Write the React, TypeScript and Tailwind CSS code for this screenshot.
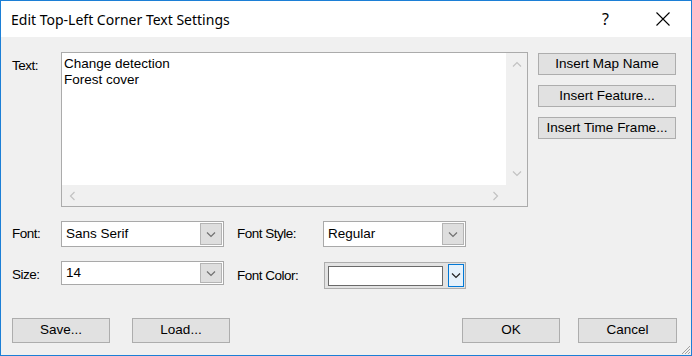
import React from 'react';

const Chevron = ({ dir, color }: { dir: 'up' | 'down' | 'left' | 'right'; color: string }) => {
    const paths: Record<string, string> = {
        down: 'M1 1.5 L5 5.5 L9 1.5',
        up: 'M1 5.5 L5 1.5 L9 5.5',
        left: 'M5.5 1 L1.5 5 L5.5 9',
        right: 'M1.5 1 L5.5 5 L1.5 9',
    };
    const vertical = dir === 'up' || dir === 'down';
    return (
        <svg width={vertical ? 10 : 7} height={vertical ? 7 : 10} viewBox={vertical ? '0 0 10 7' : '0 0 7 10'}>
            <path d={paths[dir]} fill="none" stroke={color} strokeWidth="1.2" />
        </svg>
    );
};

const Combo = ({ value, width, height }: { value: string; width: string; height: string }) => (
    <div className={`${width} ${height} flex items-stretch bg-white border border-[#a9a9a9] p-px`}>
        <div className="flex-1 pl-[3px] flex items-center text-[13.5px] text-black">{value}</div>
        <div className="w-[22px] bg-[#dedede] border border-[#b4b4b4] flex items-center justify-center">
            <Chevron dir="down" color="#707070" />
        </div>
    </div>
);

const Button = ({ label, width, height }: { label: string; width: string; height: string }) => (
    <button className={`${width} ${height} bg-[#e1e1e1] border border-[#adadad] text-[13.5px] text-black flex items-center justify-center`}>
        {label}
    </button>
);

export default function App() {
    return (
        <div className="w-[692px] h-[356px] border border-[#1c7fd6] flex flex-col bg-[#f0f0f0] relative" style={{ fontFamily: '"Liberation Sans", Arial, sans-serif' }}>
            {/* title bar */}
            <div className="h-[36px] bg-white flex items-center">
                <div className="flex-1 pl-[10px] text-[14px] text-black" style={{ fontFamily: '"Noto Sans", sans-serif' }}>
                    Edit Top-Left Corner Text Settings
                </div>
                <div className="w-[57px] h-full flex items-center justify-center text-[16px] text-black" style={{ fontFamily: '"Noto Sans", sans-serif' }}>?</div>
                <div className="w-[57px] h-full flex items-center justify-center">
                    <svg width="14" height="14" viewBox="0 0 14 14">
                        <path d="M0.5 0.5 L13.5 13.5 M13.5 0.5 L0.5 13.5" stroke="#000" strokeWidth="1.1" />
                    </svg>
                </div>
            </div>

            <div className="flex-1 flex flex-col pl-[11px] pr-[14px] pb-[12px]">
                {/* text row */}
                <div className="flex items-start mt-[15px]">
                    <div className="w-[49px] pt-[4px] text-[13.5px] text-black tracking-[-0.5px]">Text:</div>
                    <div className="w-[467px] h-[155px] border border-[#ababab] flex flex-col">
                        <div className="flex-1 flex">
                            <div className="flex-1 bg-white pl-[2px] pt-[3px] text-[13.5px] leading-[16px] text-black">
                                <div>Change detection</div>
                                <div>Forest cover</div>
                            </div>
                            <div className="w-[21px] flex flex-col justify-between items-center py-[8px]">
                                <Chevron dir="up" color="#c2c2c2" />
                                <Chevron dir="down" color="#c2c2c2" />
                            </div>
                        </div>
                        <div className="h-[21px] flex items-center justify-between pl-[7px] pr-[28px]">
                            <Chevron dir="left" color="#c2c2c2" />
                            <Chevron dir="right" color="#c2c2c2" />
                        </div>
                    </div>
                    <div className="ml-[10px] mt-px flex flex-col gap-[10px]">
                        <Button label="Insert Map Name" width="w-[138px]" height="h-[22px]" />
                        <Button label="Insert Feature..." width="w-[138px]" height="h-[22px]" />
                        <Button label="Insert Time Frame..." width="w-[138px]" height="h-[22px]" />
                    </div>
                </div>

                {/* font row */}
                <div className="flex items-center mt-[14px] text-[13.5px] text-black">
                    <div className="w-[49px] tracking-[-0.5px]">Font:</div>
                    <Combo value="Sans Serif" width="w-[163px]" height="h-[26px]" />
                    <div className="w-[86px] ml-[13px] tracking-[-0.5px]">Font Style:</div>
                    <Combo value="Regular" width="w-[143px]" height="h-[26px]" />
                </div>

                {/* size row */}
                <div className="flex items-start mt-[14px] text-[13.5px] text-black">
                    <div className="w-[49px] pt-[4px] tracking-[-0.5px]">Size:</div>
                    <Combo value="14" width="w-[163px]" height="h-[24px]" />
                    <div className="w-[87px] ml-[13px] pt-[5px] tracking-[-0.5px]">Font Color:</div>
                    <div className="w-[142px] h-[27px] mt-px bg-[#e3e3e3] border border-[#adadad] flex items-center pl-[3px] pr-px">
                        <div className="w-[115px] h-[20px] bg-white border border-[#6a6a6a]"></div>
                        <div className="ml-[5px] w-[16px] h-[23px] bg-[#e5f1fb] border border-[#0078d7] flex items-center justify-center">
                            <Chevron dir="down" color="#222" />
                        </div>
                    </div>
                </div>

                {/* bottom buttons */}
                <div className="flex-1" />
                <div className="flex items-center">
                    <Button label="Save..." width="w-[98px]" height="h-[25px]" />
                    <div className="ml-[22px]">
                        <Button label="Load..." width="w-[98px]" height="h-[25px]" />
                    </div>
                    <div className="flex-1" />
                    <Button label="OK" width="w-[98px]" height="h-[25px]" />
                    <div className="ml-[18px]">
                        <Button label="Cancel" width="w-[99px]" height="h-[25px]" />
                    </div>
                </div>
            </div>

            {/* resize grip */}
            <svg className="absolute right-0 bottom-0" width="12" height="12" viewBox="0 0 12 12">
                <path d="M11 3 L3 11 M11 6 L6 11 M11 9 L9 11" stroke="#a0a0a0" strokeWidth="1" />
            </svg>
        </div>
    );
}
